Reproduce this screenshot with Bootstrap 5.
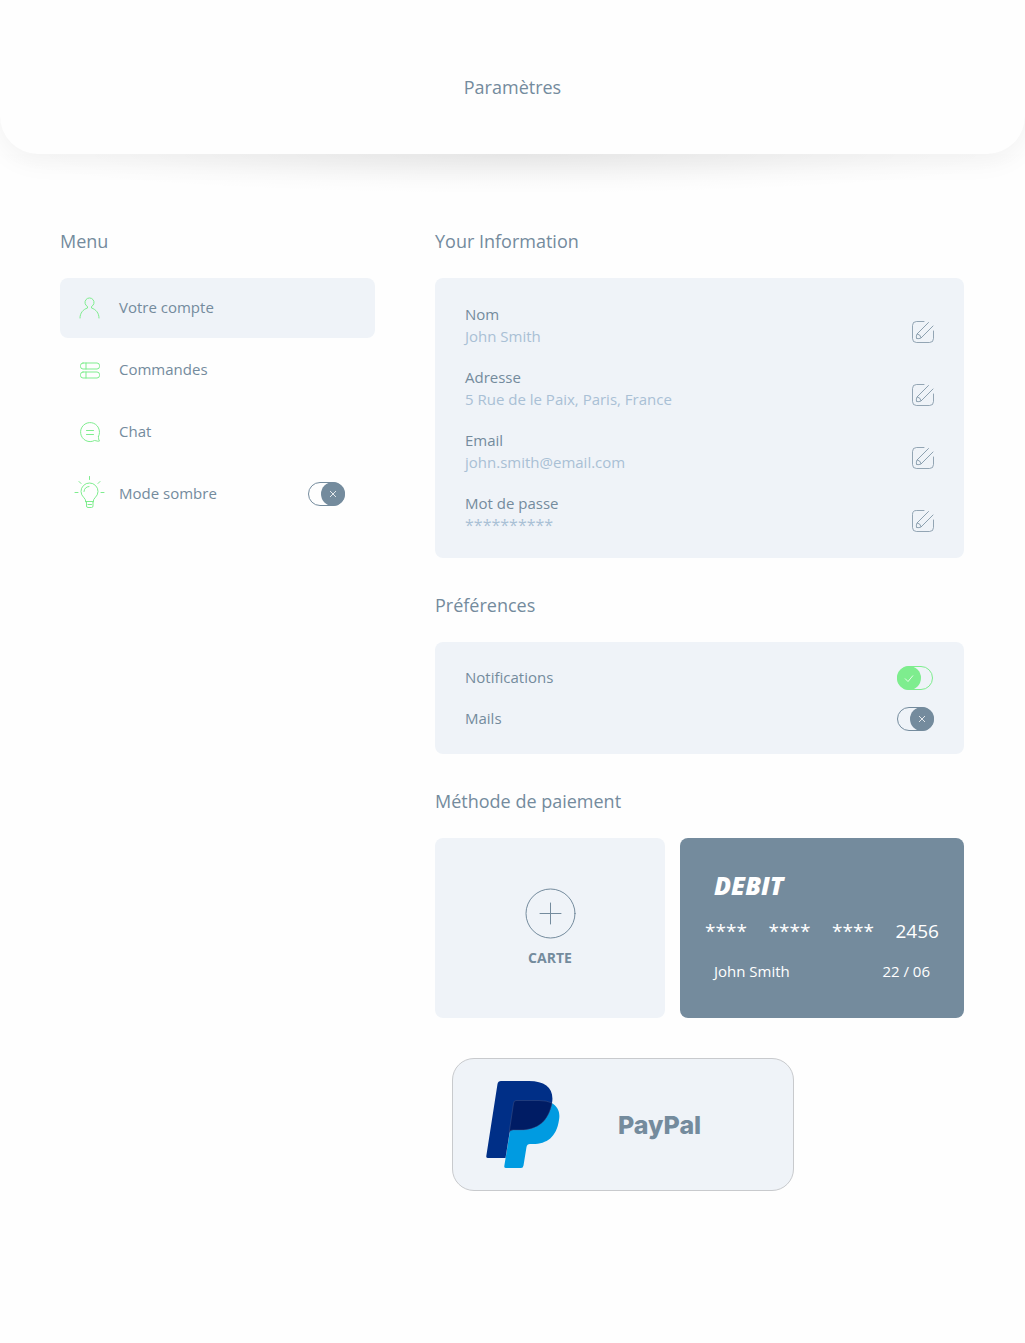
<!DOCTYPE html>
<html lang="fr">
<head>
<meta charset="utf-8">
<meta name="viewport" content="width=device-width, initial-scale=1">
<title>Paramètres</title>
<link href="https://cdn.jsdelivr.net/npm/bootstrap@5.3.0/dist/css/bootstrap.min.css" rel="stylesheet">
<style>
:root { --slate: #748b9d; --pale: #a9c0d5; --panel: #eff3f8; --mint: #7eed8e; }
body { font-family: "Open Sans", "Noto Sans", sans-serif; font-size: 15px; line-height: 22px; color: var(--slate); background: #fefefe; }
h1, h2 { font-size: 18px; line-height: 24px; font-weight: 400; margin: 0; }
h2 { margin-bottom: 25px; }
.top-bar { padding: 75px 0 55px; background: #fefefe; border-radius: 0 0 38px 38px; box-shadow: 0 4px 30px rgba(0,0,0,.06); }
.top-bar::after { content: ""; position: absolute; top: 100%; left: 0; right: 0; height: 40px; background: radial-gradient(ellipse 52% 100% at 50% 0, rgba(0,0,0,.065), rgba(0,0,0,.04) 40%, rgba(0,0,0,.012) 75%, transparent); }
.page-body { padding: 75px 61px 120px 60px; gap: 60px; }
.side { flex: 0 0 315px; }
.menu-list { gap: 2px; }
.sections { gap: 35px; min-width: 0; }
.panel { background: var(--panel); border-radius: 8px; }
.menu-item { height: 60px; padding: 0 30px 0 14px; gap: 14px; border-radius: 8px; color: inherit; text-decoration: none; }
.menu-item.current { background: var(--panel); }
.menu-item svg { width: 31px; height: 32px; stroke: var(--mint); overflow: visible; }
.item-text { padding-bottom: 2px; }
.line-art { fill: none; stroke: currentColor; stroke-width: 1; stroke-linecap: round; stroke-linejoin: round; flex: none; }
.info { padding: 25px 30px 22px; gap: 19px; }
.info dt { font-weight: 400; }
.info dd { margin: 0; color: var(--pale); }
.info .secret { font-size: 16px; }
.plain-btn { border: 0; padding: 0; color: inherit; }
.edit-btn { height: 30px; line-height: 0; background: none; }
.prefs { padding: 24px 30px 23px; gap: 17px; }
.toggle { appearance: none; margin: 0; width: 37px; height: 24px; background: url("data:image/svg+xml,%3Csvg xmlns='http://www.w3.org/2000/svg' width='37' height='24' fill='none'%3E%3Crect x='.5' y='.5' width='36' height='23' rx='11.5' stroke='%23748b9d'/%3E%3Ccircle cx='25' cy='12' r='12' fill='%23748b9d'/%3E%3Cpath d='M22 9l6 6M28 9l-6 6' stroke='%23fff' stroke-width='.8'/%3E%3C/svg%3E") no-repeat; }
.toggle:checked { background-image: url("data:image/svg+xml,%3Csvg xmlns='http://www.w3.org/2000/svg' width='37' height='24' fill='none'%3E%3Crect x='.5' y='.5' width='35' height='23' rx='11.5' stroke='%237eed8e'/%3E%3Ccircle cx='12' cy='12' r='12' fill='%237eed8e'/%3E%3Cpath d='M8 12.5l3 3 5-6' stroke='%23fff' stroke-width='.8'/%3E%3C/svg%3E"); }
.pay-row { display: grid; grid-template-columns: 230fr 284fr; gap: 15px; }
.add-card { height: 180px; gap: 8px; font-size: 14px; font-weight: 700; }
.debit { padding: 31px 25px; gap: 15px; background: var(--slate); border-radius: 8px; color: #fff; }
.debit .brand { font-size: 25px; line-height: 32px; font-weight: 800; font-style: italic; padding: 0 9px; }
.debit .digits { font-size: 19px; line-height: 30px; }
.debit .holder { padding: 0 9px; line-height: 20px; }
.paypal { width: 342px; height: 133px; margin: 5px 0 0 17px; padding: 0 0 0 33px; gap: 58px; border: 1px solid #c8cacd; border-radius: 22px; background: var(--panel); font: 800 25px/32px Inter, sans-serif; color: var(--slate); }
</style>
</head>
<body>
<header class="top-bar position-relative text-center"><h1>Paramètres</h1></header>
<main class="page-body d-flex align-items-start">
  <nav class="side" aria-labelledby="menu-title">
    <h2 id="menu-title">Menu</h2>
    <div class="menu-list d-flex flex-column">
      <a href="#" class="menu-item current d-flex align-items-center">
        <svg class="line-art" viewBox="0 0 31 32"><path d="M6 26c0-5 3-8.500 7.500-10v-1.500a4.500 4.500 0 1 1 4 0V16c4.500 1.500 7.500 5 7.500 10"/></svg>
        <span class="item-text">Votre compte</span></a>
      <a href="#" class="menu-item d-flex align-items-center">
        <svg class="line-art" viewBox="0 0 31 32"><rect x="6.500" y="9" width="19" height="6" rx="2.500"/><rect x="6.500" y="18" width="19" height="6" rx="2.500"/><path d="M12 9v6M12 18v6"/></svg>
        <span class="item-text">Commandes</span></a>
      <a href="#" class="menu-item d-flex align-items-center">
        <svg class="line-art" viewBox="0 0 31 32"><path d="M24.500 20.500a9.500 9.500 0 1 0-4 4c2 .1 3.500 1.300 5 .5-1-1.200-1-2.700-1-4.500z"/><path d="M12.500 14.500h7M12.500 18.500h7"/></svg>
        <span class="item-text">Chat</span></a>
      <div class="menu-item d-flex align-items-center">
        <svg class="line-art" viewBox="0 2 31 32"><path d="M12 26c0-4.500-5-5-5-10.500a8.500 8.500 0 0 1 17 0c0 5.500-5 6-5 10.500M11.500 25.500h8M12.500 25.500v4.500q0 1.500 1.500 1.500h3.500q1.500 0 1.500-1.500V25.500M14 28.500h3.500M10 15.500a5.500 5.500 0 0 1 5-5M15.500 .500v3M1 16.500h3M27 16.500h3M5 5.500l2 2M26 5.500l-2 2"/></svg>
        <label for="dark" class="item-text flex-grow-1">Mode sombre</label>
        <input id="dark" class="toggle" type="checkbox" role="switch">
      </div>
    </div>
  </nav>
  <div class="sections flex-grow-1 d-flex flex-column">
    <section>
      <h2>Your Information</h2>
      <div class="panel info d-flex flex-column">
        <div class="d-flex justify-content-between align-items-end"><dl class="m-0"><dt>Nom</dt><dd>John Smith</dd></dl>
          <button type="button" class="plain-btn edit-btn" aria-label="Modifier le nom"><svg class="line-art" width="22" height="22"><use href="#edit"/></svg></button></div>
        <div class="d-flex justify-content-between align-items-end"><dl class="m-0"><dt>Adresse</dt><dd>5 Rue de le Paix, Paris, France</dd></dl>
          <button type="button" class="plain-btn edit-btn" aria-label="Modifier l'adresse"><svg class="line-art" width="22" height="22"><use href="#edit"/></svg></button></div>
        <div class="d-flex justify-content-between align-items-end"><dl class="m-0"><dt>Email</dt><dd>john.smith@email.com</dd></dl>
          <button type="button" class="plain-btn edit-btn" aria-label="Modifier l'email"><svg class="line-art" width="22" height="22"><use href="#edit"/></svg></button></div>
        <div class="d-flex justify-content-between align-items-end"><dl class="m-0"><dt>Mot de passe</dt><dd class="secret">**********</dd></dl>
          <button type="button" class="plain-btn edit-btn" aria-label="Modifier le mot de passe"><svg class="line-art" width="22" height="22"><use href="#edit"/></svg></button></div>
      </div>
    </section>
    <section>
      <h2>Préférences</h2>
      <div class="panel prefs d-flex flex-column">
        <div class="d-flex justify-content-between align-items-center"><label for="notif" class="item-text">Notifications</label><input id="notif" class="toggle" type="checkbox" role="switch" checked></div>
        <div class="d-flex justify-content-between align-items-center"><label for="mails" class="item-text">Mails</label><input id="mails" class="toggle" type="checkbox" role="switch"></div>
      </div>
    </section>
    <section>
      <h2>Méthode de paiement</h2>
      <div class="pay-row">
        <button type="button" class="plain-btn panel add-card d-flex flex-column align-items-center justify-content-center">
          <svg class="line-art" width="51" height="51"><circle cx="25.500" cy="25.500" r="24.500"/><path d="M25.500 15v21M15 25.500h21"/></svg>
          <span>CARTE</span>
        </button>
        <div class="debit d-flex flex-column">
          <div class="brand">DEBIT</div>
          <div class="digits d-flex justify-content-between"><span>****</span><span>****</span><span>****</span><span>2456</span></div>
          <div class="holder d-flex justify-content-between"><span>John Smith</span><span>22 / 06</span></div>
        </div>
      </div>
    </section>
    <button type="button" class="paypal d-flex align-items-center">
      <svg width="74" height="88" viewBox="486 1081 74 88" aria-hidden="true">
        <path fill="#009be1" d="M551.500 1103c6 3 9 9 7.500 17-2.500 17-12 24-26 24h-3q-3 0-3.500 3l-3 18.500q-.4 2.500-2.500 2.500h-15q-2 0-1.700-2l6-37z"/>
        <path fill="#002f87" d="M501 1081h28c17 0 25.500 8 23 22-3.500 18-14 27-32 27h-7q-3 0-3.500 3l-4 25h-17.500q-2 0-1.700-2l11.200-72q.5-3 3.500-3z"/>
        <path fill="#001c64" stroke="#50608c" stroke-width=".4" d="M516 1100.500h23q8 0 13 2.500c-3.500 18-14 27-32 27h-7q-2.500 0-3.700 1.500l4.200-28q.4-3 2.500-3z"/>
      </svg>
      <span>PayPal</span>
    </button>
  </div>
</main>
<svg class="position-absolute" width="0" height="0" aria-hidden="true"><symbol id="edit" viewBox="0 0 22 22"><path stroke-opacity=".75" d="M12 .500H4.500a4 4 0 0 0-4 4v13a4 4 0 0 0 4 4h13a4 4 0 0 0 4-4V10"/><path stroke-width=".8" d="M16.500 1.500L5 13q-1 2-.5 4.500 2.500.5 4.500-.5L21 5M5.500 13q3 .5 3.500 3.500"/></symbol></svg>
<script src="https://cdn.jsdelivr.net/npm/bootstrap@5.3.0/dist/js/bootstrap.bundle.min.js"></script>
</body>
</html>
